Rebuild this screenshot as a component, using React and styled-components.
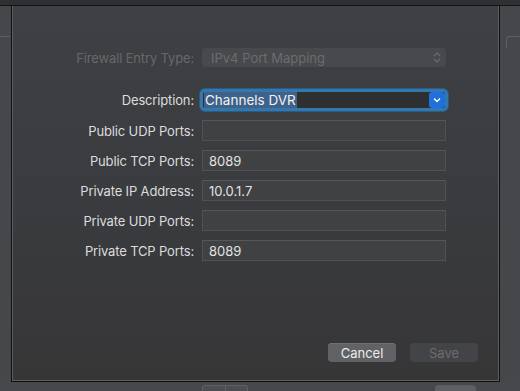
import React from 'react';
import styled, { createGlobalStyle } from 'styled-components';

const GlobalStyle = createGlobalStyle`
  html, body {
    margin: 0;
    padding: 0;
    width: 520px;
    height: 391px;
    overflow: hidden;
    background: #46484b;
    font-family: 'Inter', 'Liberation Sans', sans-serif;
    -webkit-font-smoothing: antialiased;
  }
`;

const Screen = styled.div`
  width: 520px;
  height: 391px;
  display: flex;
  flex-direction: column;
  background: #46484b;
`;

const TitleStrip = styled.div`
  height: 5px;
  background: #2f3033;
  border-bottom: 1px solid #141414;
  flex-shrink: 0;
`;

const Middle = styled.div`
  display: flex;
  height: 376px;
  flex-shrink: 0;
`;

const Gutter = styled.div`
  width: ${(p) => p.$w}px;
  flex-shrink: 0;
  position: relative;
  background: #45474b;
`;

// edges of the window controls peeking out behind the sheet
const GutterLine = styled.div`
  position: absolute;
  top: 30px;
  left: ${(p) => (p.$right ? '6px' : '0')};
  right: ${(p) => (p.$right ? '0' : '1px')};
  height: 11px;
  border-top: 1px solid #5d5f62;
  border-left: ${(p) => (p.$right ? '1px solid #5d5f62' : 'none')};
  border-top-left-radius: ${(p) => (p.$right ? '4px' : '0')};
`;

const Sheet = styled.div`
  flex: 1;
  display: flex;
  flex-direction: column;
  background: linear-gradient(180deg, #3e4043 0%, #3a3b3e 55%, #363637 100%);
  border: 1px solid #101010;
  border-top: none;
  box-shadow: inset 1px 0 0 #5b5d60, inset -1px 0 0 #5b5d60, inset 0 -1px 0 #5b5d60;
`;

const Form = styled.div`
  display: grid;
  grid-template-columns: 182px 244px;
  column-gap: 8px;
  align-items: center;
  padding-top: 42px;
`;

const Label = styled.div`
  text-align: right;
  font-size: 13px;
  letter-spacing: -0.15px;
  color: ${(p) => (p.$disabled ? '#67686b' : '#dcdcdd')};
  margin-top: ${(p) => p.$mt || 0}px;
  white-space: nowrap;
`;

const PopUp = styled.div`
  height: 19px;
  border-radius: 4px;
  background: #47494c;
  box-sizing: border-box;
  display: flex;
  align-items: center;
  justify-content: space-between;
  padding: 0 5px 0 9px;
  font-size: 13px;
  color: #6b6c6f;
`;

const Combo = styled.div`
  height: 22px;
  box-sizing: border-box;
  margin: ${(p) => p.$mt || 0}px -2px 0 -2px;
  border-radius: 5px;
  border: 3px solid #3378ad;
  box-shadow: 0 0 0 1px #2a5b86;
  background: #2d2f31;
  display: flex;
  align-items: stretch;
  overflow: hidden;
`;

const ComboText = styled.div`
  flex: 1;
  display: flex;
  align-items: center;
  padding-left: 1px;
`;

const Selected = styled.span`
  background: #3e6289;
  color: #f2f2f2;
  font-size: 13.5px;
  line-height: 16px;
  padding: 0 1px;
`;

const ComboButton = styled.div`
  width: 16px;
  background: #1f6fdc;
  border-radius: 3px;
  display: flex;
  align-items: center;
  justify-content: center;
`;

const Field = styled.div`
  height: 21px;
  box-sizing: border-box;
  background: #3f4143;
  border: 1px solid #4f5154;
  border-top-color: #55575a;
  display: flex;
  align-items: center;
  padding-left: 6px;
  font-size: 13px;
  color: #e3e3e3;
  margin-top: ${(p) => p.$mt || 0}px;
`;

const Spacer = styled.div`
  flex: 1;
`;

const Buttons = styled.div`
  display: flex;
  justify-content: flex-end;
  gap: 14px;
  padding: 0 21px 19px 0;
`;

const Button = styled.div`
  width: 68px;
  height: 19px;
  border-radius: 4px;
  display: flex;
  align-items: center;
  justify-content: center;
  font-size: 13px;
  background: ${(p) => (p.$disabled ? '#434447' : '#616265')};
  color: ${(p) => (p.$disabled ? '#6c6d70' : '#ececec')};
  box-shadow: ${(p) => (p.$disabled ? 'none' : 'inset 0 1px 0 #6f7073')};
`;

const Bottom = styled.div`
  flex: 1;
  display: flex;
  align-items: flex-start;
  padding-top: 3px;
`;

const Segmented = styled.div`
  margin-left: 202px;
  width: 44px;
  height: 10px;
  display: flex;
  border: 1px solid #5e6063;
  border-bottom: none;
  border-radius: 3px 3px 0 0;
  background: #4c4e51;
`;

const Segment = styled.div`
  flex: 1;
  border-right: ${(p) => (p.$last ? 'none' : '1px solid #5e6063')};
`;

const EditButton = styled.div`
  margin-left: 187px;
  width: 41px;
  height: 10px;
  border-radius: 4px 4px 0 0;
  background: #5d5f62;
`;

export default function App() {
  return (
    <Screen>
      <GlobalStyle />
      <TitleStrip />
      <Middle>
        <Gutter $w={11}>
          <GutterLine />
        </Gutter>
        <Sheet>
          <Form>
            <Label $disabled>Firewall Entry Type:</Label>
            <PopUp>
              <span>IPv4 Port Mapping</span>
              <svg width="8" height="11" viewBox="0 0 8 11">
                <path d="M1 4 L4 1 L7 4 M1 7 L4 10 L7 7" fill="none" stroke="#6b6c6f" strokeWidth="1.2" />
              </svg>
            </PopUp>

            <Label $mt={22}>Description:</Label>
            <Combo $mt={22}>
              <ComboText>
                <Selected>Channels DVR</Selected>
              </ComboText>
              <ComboButton>
                <svg width="8" height="6" viewBox="0 0 8 6">
                  <path d="M1 1.5 L4 4.5 L7 1.5" fill="none" stroke="#ffffff" strokeWidth="1.4" />
                </svg>
              </ComboButton>
            </Combo>

            <Label $mt={9}>Public UDP Ports:</Label>
            <Field $mt={9} />
            <Label $mt={9}>Public TCP Ports:</Label>
            <Field $mt={9}>8089</Field>
            <Label $mt={9}>Private IP Address:</Label>
            <Field $mt={9}>10.0.1.7</Field>
            <Label $mt={9}>Private UDP Ports:</Label>
            <Field $mt={9} />
            <Label $mt={9}>Private TCP Ports:</Label>
            <Field $mt={9}>8089</Field>
          </Form>
          <Spacer />
          <Buttons>
            <Button>Cancel</Button>
            <Button $disabled>Save</Button>
          </Buttons>
        </Sheet>
        <Gutter $w={20}>
          <GutterLine $right />
        </Gutter>
      </Middle>
      <Bottom>
        <Segmented>
          <Segment />
          <Segment $last />
        </Segmented>
        <EditButton />
      </Bottom>
    </Screen>
  );
}
